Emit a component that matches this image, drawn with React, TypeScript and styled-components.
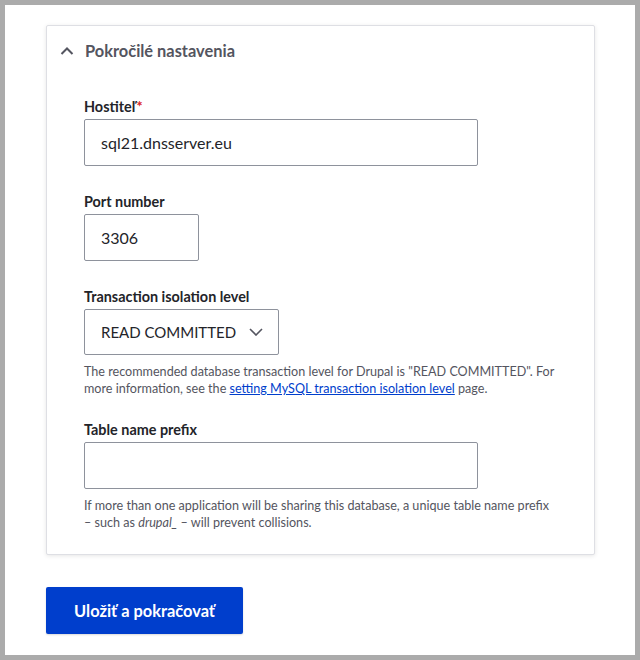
import React from 'react';
import styled, { createGlobalStyle } from 'styled-components';

const GlobalStyle = createGlobalStyle`
    html, body {
        margin: 0;
        padding: 0;
        background: #ababab;
    }
    body {
        font-family: Lato, "Liberation Sans", sans-serif;
        color: #232429;
    }
`;

const Frame = styled.div`
    box-sizing: border-box;
    width: 640px;
    height: 660px;
    border: 5px solid #ababab;
    background: #fff;
    padding: 20px 40px 0 41px;
`;

const Card = styled.div`
    border: 1px solid #dedfe4;
    border-radius: 2px;
    box-shadow: 0 1px 4px rgba(0, 0, 0, 0.1);
    background: #fff;
`;

const Summary = styled.div`
    display: flex;
    align-items: center;
    gap: 11px;
    height: 48px;
    padding-left: 13px;
    font-size: 16.4px;
    font-weight: 700;
    color: #545560;
`;

const Body = styled.div`
    padding: 24px 20px 23px 37px;
`;

const Field = styled.div<{ $gap?: number }>`
    margin-bottom: ${p => p.$gap ?? 27}px;
`;

const Label = styled.label`
    display: block;
    font-size: 14.4px;
    line-height: 18px;
    font-weight: 700;
    margin-bottom: 3px;
`;

const Required = styled.span`
    color: #dc2323;
`;

const Input = styled.div<{ $width: number }>`
    box-sizing: border-box;
    width: ${p => p.$width}px;
    height: 47px;
    display: flex;
    align-items: center;
    padding: 0 16px;
    border: 1px solid #8e929c;
    border-radius: 2px;
    font-size: 16px;
    color: #232429;
`;

const Select = styled(Input)`
    justify-content: space-between;
    padding-right: 15px;
    height: 46px;
    font-size: 15px;
`;

const Description = styled.div`
    margin-top: 8px;
    font-size: 12.6px;
    line-height: 17px;
    color: #545560;
    max-width: 480px;

    a {
        color: #003ecc;
        text-decoration: underline;
    }
`;

const NoWrap = styled.span`
    white-space: nowrap;
`;

const Button = styled.button`
    margin-top: 32px;
    width: 197px;
    height: 47px;
    border: none;
    border-radius: 2px;
    background: #003ecc;
    color: #fff;
    font-family: inherit;
    font-size: 16.4px;
    font-weight: 700;
    box-shadow: 0 1px 2px rgba(0, 0, 0, 0.15);
`;

const ChevronUp = () => (
    <svg width="14" height="9" viewBox="0 0 14 9">
        <path d="M1.5 8 L7 2.5 L12.5 8" fill="none" stroke="#545560" strokeWidth="2" />
    </svg>
);

const ChevronDown = () => (
    <svg width="14" height="8" viewBox="0 0 14 8">
        <path d="M1 1 L7 7 L13 1" fill="none" stroke="#545560" strokeWidth="1.6" />
    </svg>
);

export default function App() {
    return (
        <>
            <GlobalStyle />
            <Frame>
                <Card>
                    <Summary>
                        <ChevronUp />
                        <span>Pokročilé nastavenia</span>
                    </Summary>
                    <Body>
                        <Field>
                            <Label>Hostiteľ<Required>*</Required></Label>
                            <Input $width={394}>sql21.dnsserver.eu</Input>
                        </Field>
                        <Field>
                            <Label>Port number</Label>
                            <Input $width={115}>3306</Input>
                        </Field>
                        <Field $gap={24}>
                            <Label>Transaction isolation level</Label>
                            <Select $width={195}>
                                <span>READ COMMITTED</span>
                                <ChevronDown />
                            </Select>
                            <Description>
                                The recommended database transaction level for Drupal is "READ COMMITTED". For more
                                information, see the <a>setting MySQL transaction isolation level</a> page.
                            </Description>
                        </Field>
                        <Field $gap={0}>
                            <Label>Table name prefix</Label>
                            <Input $width={394} />
                            <Description>
                                If more than one application will be sharing this database, a unique table name
                                prefix <NoWrap>– such</NoWrap> as <i>drupal_</i> – will prevent collisions.
                            </Description>
                        </Field>
                    </Body>
                </Card>
                <Button>Uložiť a pokračovať</Button>
            </Frame>
        </>
    );
}
